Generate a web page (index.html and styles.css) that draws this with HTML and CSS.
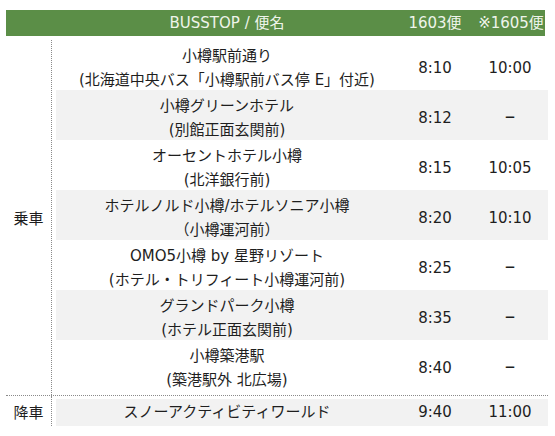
FILE: index.html
```html
<!DOCTYPE html>
<html lang="ja">
<head>
<meta charset="utf-8">
<link rel="stylesheet" href="styles.css">
</head>
<body>
<div class="timetable">
  <div class="head">
    <div class="hc"></div>
    <div class="hc">BUSSTOP / 便名</div>
    <div class="hc">1603便</div>
    <div class="hc last">※1605便</div>
  </div>
  <div class="section board">
    <div class="side">乗車</div>
    <div class="rows">
      <div class="row">
        <div class="name">小樽駅前通り<br>(北海道中央バス「小樽駅前バス停 E」付近)</div>
        <div class="t">8:10</div><div class="t">10:00</div>
      </div>
      <div class="row alt">
        <div class="name">小樽グリーンホテル<br>(別館正面玄関前)</div>
        <div class="t">8:12</div><div class="t dash">–</div>
      </div>
      <div class="row">
        <div class="name">オーセントホテル小樽<br>(北洋銀行前)</div>
        <div class="t">8:15</div><div class="t">10:05</div>
      </div>
      <div class="row alt">
        <div class="name">ホテルノルド小樽/ホテルソニア小樽<br>（小樽運河前）</div>
        <div class="t">8:20</div><div class="t">10:10</div>
      </div>
      <div class="row">
        <div class="name">OMO5小樽 by 星野リゾート<br>(ホテル・トリフィート小樽運河前)</div>
        <div class="t">8:25</div><div class="t dash">–</div>
      </div>
      <div class="row alt">
        <div class="name">グランドパーク小樽<br>(ホテル正面玄関前)</div>
        <div class="t">8:35</div><div class="t dash">–</div>
      </div>
      <div class="row">
        <div class="name">小樽築港駅<br>(築港駅外 北広場)</div>
        <div class="t">8:40</div><div class="t dash">–</div>
      </div>
    </div>
  </div>
  <div class="section alight">
    <div class="side">降車</div>
    <div class="rows">
      <div class="row single alt">
        <div class="name">スノーアクティビティワールド</div>
        <div class="t">9:40</div><div class="t">11:00</div>
      </div>
    </div>
  </div>
</div>
</body>
</html>
```
FILE: styles.css
```css
html, body {
  margin: 0;
  background: #fff;
}
body {
  padding: 10px 0 0 6px;
  font-family: "DejaVu Sans", "Noto Sans CJK JP", sans-serif;
  font-size: 15px;
  color: #1e1e1e;
}
.timetable {
  width: 542px;
}
.head {
  width: 539px;
  height: 26px;
  background: #5b8e47;
  color: #eef4ea;
  display: grid;
  grid-template-columns: 50px 342px 74px 73px;
  align-items: center;
  line-height: 26px;
}
.hc {
  text-align: center;
  white-space: nowrap;
}
.hc.last {
  padding-left: 5px;
}
.section {
  display: flex;
  border-bottom: 1px dotted #8a8a8a;
}
.board {
  margin-top: 4px;
}
.alight {
  border-bottom: none;
}
.side {
  width: 45px;
  flex: none;
  border-right: 1px dotted #8a8a8a;
  display: flex;
  align-items: center;
  justify-content: center;
  font-family: "Noto Sans CJK JP", sans-serif;
}
.rows {
  margin-left: 4px;
  width: 492px;
  display: flex;
  flex-direction: column;
}
.board .rows {
  padding-bottom: 5px;
}
.alight .rows {
  padding: 3px 0 0;
  height: 30px;
  box-sizing: border-box;
}
.row {
  height: 50px;
  box-sizing: border-box;
  padding-top: 4px;
  display: grid;
  grid-template-columns: 342px 74px 76px;
  align-items: center;
  line-height: 24px;
}
.row.single {
  height: 27px;
  padding-top: 0;
  line-height: 27px;
}
.row.alt {
  background: #f2f2f2;
}
.name {
  text-align: center;
  white-space: nowrap;
}
.t {
  text-align: center;
}
.t.dash {
  font-size: 21px;
  line-height: 24px;
  margin-top: -4px;
}
```
